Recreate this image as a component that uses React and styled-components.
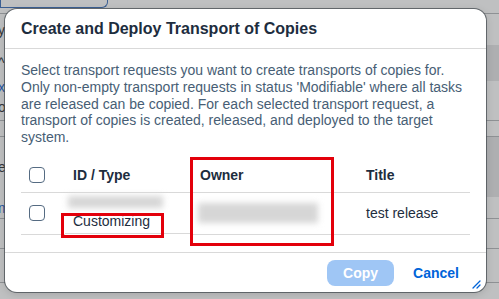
import React from 'react';
import styled, { createGlobalStyle } from 'styled-components';

const Global = createGlobalStyle`
  html, body { margin: 0; padding: 0; }
  body { font-family: "Liberation Sans", Arial, sans-serif; background: #bfc0c1; }
`;

const Screen = styled.div`
  position: relative;
  width: 499px;
  height: 299px;
  overflow: hidden;
  background: #bfc0c1;
`;

/* ---------- dimmed page behind the dialog ---------- */
const Backdrop = styled.div`
  display: flex;
  flex-direction: column;
  height: 100%;
`;

const BgRow = styled.div`
  display: flex;
  align-items: center;
  height: ${(p) => p.$h}px;
  border-bottom: ${(p) => (p.$line ? '1px solid #8e9194' : 'none')};
  background: ${(p) => (p.$shade ? 'linear-gradient(90deg, #bfc0c1 0 470px, #aeafb1 470px)' : 'transparent')};
  box-sizing: border-box;
`;

const BgField = styled.div`
  width: 106px;
  height: 12px;
  margin-top: -10px;
  border: 1px solid #3b5f93;
  border-top: none;
  border-radius: 0 0 6px 0;
`;

const BgLetter = styled.span`
  font-size: 14px;
  margin-left: -2px;
  color: ${(p) => (p.$blue ? '#2a57a0' : '#33363a')};
  line-height: 1;
`;

/* ---------- dialog ---------- */
const Dialog = styled.div`
  position: absolute;
  left: 5px;
  top: 9px;
  width: 481px;
  height: 283px;
  box-sizing: border-box;
  background: #fff;
  border-radius: 12px;
  box-shadow: 0 0 0 1px rgba(70, 76, 82, 0.75), 0 2px 8px rgba(0, 0, 0, 0.15);
  display: flex;
  flex-direction: column;
`;

const Header = styled.header`
  height: 40px;
  box-sizing: border-box;
  padding: 0 16px;
  display: flex;
  align-items: center;
  border-bottom: 1px solid #d9d9d9;
`;

const Title = styled.h1`
  margin: 0;
  font-size: 16px;
  font-weight: 700;
  color: #1d2d3e;
`;

const Content = styled.div`
  flex: 1;
  padding: 13px 16px 0;
  display: flex;
  flex-direction: column;
`;

const Description = styled.p`
  margin: 0;
  font-size: 14px;
  line-height: 16.75px;
  color: #475e75;
`;

const Table = styled.div`
  margin-top: 13px;
  display: grid;
  grid-template-columns: 44px 127px 166px 1fr;
`;

const Cell = styled.div`
  display: flex;
  flex-direction: column;
  justify-content: ${(p) => (p.$bottom ? 'flex-end' : 'center')};
  padding: 0 8px ${(p) => (p.$bottom ? 4 : 0)}px;
  height: ${(p) => (p.$head ? 33 : 41)}px;
  box-sizing: ${(p) => (p.$bottom ? 'border-box' : 'content-box')};
  border-bottom: 1px solid #d9d9d9;
  font-size: 14px;
  line-height: 16px;
  font-weight: ${(p) => (p.$head ? 700 : 400)};
  color: #1d2d3e;
`;

const Check = styled.span`
  display: block;
  width: 16px;
  height: 16px;
  box-sizing: border-box;
  border: 1px solid #556b82;
  border-radius: 4px;
  background: #fff;
`;

const Blur = styled.span`
  display: block;
  width: ${(p) => p.$w}px;
  height: ${(p) => p.$h}px;
  margin-left: ${(p) => p.$ml || 0}px;
  margin-bottom: ${(p) => p.$mb || 0}px;
  background: #d6d6d6;
  filter: blur(3px);
`;

const Footer = styled.footer`
  height: 40px;
  box-sizing: border-box;
  border-top: 1px solid #d9d9d9;
  display: flex;
  justify-content: flex-end;
  align-items: center;
  gap: 11px;
  padding: 0 19px 0 0;
`;

const Button = styled.button`
  height: 26px;
  border-radius: 8px;
  border: none;
  font-family: inherit;
  font-size: 14px;
  font-weight: 700;
  padding: 0 ${(p) => (p.$primary ? 16 : 8)}px;
  min-width: ${(p) => (p.$primary ? 64 : 0)}px;
  background: ${(p) => (p.$primary ? '#9fc6f5' : 'transparent')};
  color: ${(p) => (p.$primary ? '#fff' : '#0064d9')};
`;

const Resize = styled.svg`
  position: absolute;
  right: 5px;
  bottom: 3px;
`;

const Mark = styled.div`
  position: absolute;
  left: ${(p) => p.$x}px;
  top: ${(p) => p.$y}px;
  width: ${(p) => p.$w}px;
  height: ${(p) => p.$h}px;
  box-sizing: border-box;
  border: 3px solid #e3000b;
  pointer-events: none;
`;

export default function App() {
  return (
    <Screen>
      <Global />
      <Backdrop>
        <BgRow $h={14} $line><BgField /></BgRow>
        <BgRow $h={31}><BgLetter>y</BgLetter></BgRow>
        <BgRow $h={36} $shade><BgLetter>^</BgLetter></BgRow>
        <BgRow $h={12}><BgLetter $blue>x</BgLetter></BgRow>
        <BgRow $h={28} $line><BgLetter>o</BgLetter></BgRow>
        <BgRow $h={16} $line />
        <BgRow $h={60} $shade><BgLetter>e</BgLetter></BgRow>
        <BgRow $h={22} $line><BgLetter $blue>m</BgLetter></BgRow>
        <BgRow $h={30} $line />
        <BgRow $h={34} $line />
      </Backdrop>

      <Dialog>
        <Header>
          <Title>Create and Deploy Transport of Copies</Title>
        </Header>
        <Content>
          <Description>
            Select transport requests you want to create transports of copies for.
            Only non-empty transport requests in status 'Modifiable' where all tasks
            are released can be copied. For each selected transport request, a
            transport of copies is created, released, and deployed to the target
            system.
          </Description>
          <Table>
            <Cell $head><Check /></Cell>
            <Cell $head>ID / Type</Cell>
            <Cell $head>Owner</Cell>
            <Cell $head>Title</Cell>

            <Cell><Check /></Cell>
            <Cell $bottom>
              <Blur $w={95} $h={12} $ml={-5} $mb={5} />
              <span>Customizing</span>
            </Cell>
            <Cell><Blur $w={120} $h={20} $ml={-2} /></Cell>
            <Cell>test release</Cell>
          </Table>
        </Content>
        <Footer>
          <Button $primary disabled>Copy</Button>
          <Button>Cancel</Button>
        </Footer>
        <Resize width="9" height="9" viewBox="0 0 9 9">
          <path d="M1 8 L8 1 M5 8 L8 5" stroke="#0064d9" strokeWidth="1.3" strokeLinecap="round" />
        </Resize>
        <Mark $x={56} $y={204} $w={103} $h={25} />
        <Mark $x={185} $y={148} $w={144} $h={89} />
      </Dialog>
    </Screen>
  );
}
